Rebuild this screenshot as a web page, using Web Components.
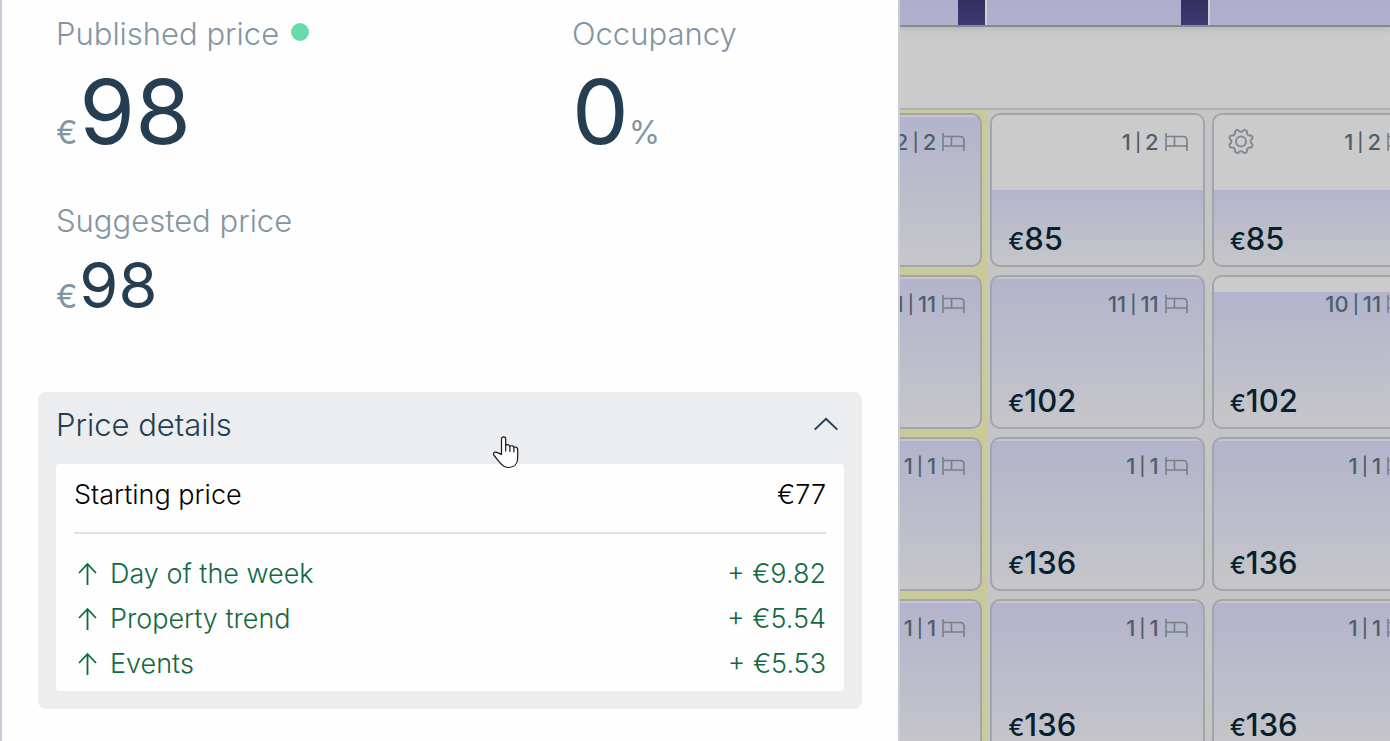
<!DOCTYPE html>
<html lang="en">
<head>
<meta charset="utf-8">
<title>Price overview</title>
<style>
  body { margin: 0; font-family: Inter, "Liberation Sans", sans-serif; background: #cbcbcb; }
</style>
</head>
<body>
<pricing-view></pricing-view>

<template id="t-view">
  <style>
    :host { display: grid; grid-template-columns: 900fr 490fr; height: 100vh; overflow: hidden; }
  </style>
  <price-panel></price-panel>
  <rate-calendar></rate-calendar>
</template>

<template id="t-panel">
  <style>
    :host { display: block; box-sizing: border-box; background: #fefefe; border: solid #c8ced8; border-width: 0 2px; padding: 14px 36px 32px; overflow: hidden; }
    .metrics { display: grid; grid-template-columns: 516fr 272fr; row-gap: 41px; padding: 0 18px; margin-bottom: 73px; }
    .dot { display: inline-block; width: 18px; height: 18px; border-radius: 50%; background: #6adaad; }
  </style>
  <div class="metrics">
    <price-metric prefix="€" value="98">Published price<span slot="status" class="dot"></span></price-metric>
    <price-metric suffix="%" value="0">Occupancy</price-metric>
    <price-metric compact prefix="€" value="98">Suggested price</price-metric>
  </div>
  <price-details></price-details>
</template>

<template id="t-metric">
  <style>
    :host { display: block; color: #8495a2; font-size: 31px; }
    .label { display: flex; align-items: center; gap: 12px; line-height: 40px; margin-bottom: 10px; font-weight: 350; }
    .label ::slotted(span) { margin-bottom: 4px; }
    .value { font-size: 90px; line-height: 96px; white-space: nowrap; color: #263e51; }
    .pre, .suf { font-size: 32px; line-height: 1; color: #8495a2; }
    .pre:not(:empty) { margin-right: 2px; }
    :host([compact]) .value { font-size: 63px; line-height: 68px; }
  </style>
  <div class="label"><span><slot></slot></span><slot name="status"></slot></div>
  <div class="value"><span class="pre"></span><span class="num"></span><span class="suf"></span></div>
</template>

<template id="t-details">
  <style>
    :host { display: block; position: relative; background: #ecedef; border-radius: 8px; padding: 0 18px 18px; }
    button { all: unset; display: flex; width: 100%; height: 72px; box-sizing: border-box; padding: 0 6px 8px 0; align-items: center; justify-content: space-between; font-size: 31px; font-weight: 350; color: #263e51; cursor: pointer; }
    .pointer { position: absolute; left: 55.2%; top: 44px; }
    .body { background: #fefefe; border-radius: 4px; padding: 0 18px 5px; }
    table { width: 100%; border-collapse: collapse; font-size: 27px; line-height: 36px; font-weight: 350; }
    th { font-weight: inherit; text-align: left; padding: 0; }
    td { text-align: right; padding: 0; }
    thead th, thead td { padding: 13px 0 19px; border-bottom: 2px solid #dde1e5; color: #000; }
    tbody { color: #126842; }
    tbody tr { height: 45px; }
    tbody::before { content: ""; display: table-row; height: 18px; }
    .factor { display: flex; align-items: center; gap: 10px; }
  </style>
  <button type="button" aria-expanded="true">Price details
    <svg width="24" height="14" viewBox="0 0 24 14" fill="none" stroke="#263e51" stroke-width="2"><path d="M.7 12.6 12 1.8l11.3 10.8"/></svg>
  </button>
  <div class="body">
    <table>
      <thead><tr><th scope="row">Starting price</th><td>€77</td></tr></thead>
      <tbody></tbody>
    </table>
  </div>
  <svg class="pointer" width="26" height="33" viewBox="0 0 26 33" fill="#fff" stroke="#14142a" stroke-width="1.2" stroke-linejoin="round" stroke-linecap="round"><path d="M8.500 18.500V3.200C8.500.200 12.700.200 12.700 3.200V9.200C14.300 8.500 16.200 8.900 16.900 10.200 18.600 9.300 20.200 9.800 20.900 11.200 22.900 10.600 24.700 11.400 24.700 13.700V21.500C24.700 28 21 31.500 15.800 31.500 11.300 31.500 9 29.300 6.700 26.300L1.100 19.500C-.3 17.400 1.200 15.600 3.700 16.300 5.700 16.900 7 17.700 8.500 18.500Z"/><path d="M12.700 9V15M16.900 10V15.500M20.900 11V15.800" fill="none"/></svg>
</template>

<template id="t-calendar">
  <style>
    :host { display: grid; grid-template-rows: 27px 81px 1fr; min-width: 0; overflow: hidden; background: #c5c5c5; }
    .chart, .grid { display: grid; grid-template-columns: 17.800% 45.400% 45.400%; }
    .chart { background: linear-gradient(#aeaccd, #b2b1cb); border-bottom: 2px solid #808a92; box-shadow: 0 1px 8px #0002; box-sizing: border-box; z-index: 1; }
    .bar { justify-self: end; width: 27px; background: linear-gradient(#32305d, #3e3a74); border-right: 2px solid #d0d0d0; }
    .gap { background: #cbcbcb; }
    .grid { border-top: 2px solid #adb1b5; align-items: start; }
    .col { display: grid; grid-auto-rows: 154px; gap: 8px; padding: 3px 5px 3px 3px; min-width: 0; }
    .today { background: #c9c999; padding-left: 0; }
    .col:last-child { padding-left: 2px; }
  </style>
  <div class="chart"><div class="bar"></div><div class="bar"></div></div>
  <div class="gap"></div>
  <div class="grid">
    <div class="col today">
      <rate-card edge rooms="2|2"></rate-card><rate-card edge rooms="11|11"></rate-card><rate-card edge rooms="1|1"></rate-card><rate-card edge rooms="1|1"></rate-card>
    </div>
    <div class="col">
      <rate-card rooms="1|2" price="85" fill="50"></rate-card><rate-card rooms="11|11" price="102"></rate-card><rate-card rooms="1|1" price="136"></rate-card><rate-card rooms="1|1" price="136"></rate-card>
    </div>
    <div class="col">
      <rate-card rooms="1|2" price="85" fill="50" settings></rate-card><rate-card rooms="10|11" price="102" fill="90"></rate-card><rate-card rooms="1|1" price="136"></rate-card><rate-card rooms="1|1" price="136"></rate-card>
    </div>
  </div>
</template>

<template id="t-card">
  <style>
    :host { display: flex; flex-direction: column; justify-content: space-between; box-sizing: border-box; min-width: 0; overflow: hidden; border: 2px solid #a0a6ab; border-radius: 10px; padding: 12px 15px 6px 16px; color: #081f2d; font-weight: 500;
      background: linear-gradient(#b3b3cc, #c6c6ca) 0 2px / 100% 100% #cbcbcb; }
    :host([fill]) { background-size: 100% var(--fill); background-position: 0 100%; background-repeat: no-repeat; }
    :host([edge]) { border-left: 0; border-radius: 0 10px 10px 0; padding-left: 0; }
    .top { display: flex; align-items: center; justify-content: flex-end; gap: 6px; height: 30px; font-size: 22px; color: #4e5f6b; }
    .gear { margin-right: auto; margin-left: -3px; display: none; }
    :host([settings]) .gear { display: block; }
    .rooms { display: flex; align-items: center; gap: 4px; }
    .bar { font-size: 18px; }
    .top svg { flex: none; }
    .price { font-size: 31px; line-height: 40px; }
    .price small { font-size: 24px; line-height: 1; }
  </style>
  <div class="top">
    <svg class="gear" width="28" height="28" viewBox="0 0 28 28" fill="none" stroke="#808b94" stroke-width="2"><circle cx="14" cy="13.500" r="5"/><path class="rim" stroke-linejoin="round"/></svg>
    <span class="rooms"></span>
    <svg width="23" height="18" viewBox="0 0 23 18" fill="none" stroke="#75818b" stroke-width="1.6"><path d="M1 0V18M1 3.500H18Q22 3.500 22 7.500V18M1 13H22M9.500 3.500V13"/></svg>
  </div>
  <div class="price"></div>
</template>

<script>
  const stamp = (el, id) => {
    const root = el.attachShadow({ mode: "open" });
    root.append(document.getElementById(id).content.cloneNode(true));
    return root;
  };

  /* Outline of an eight-toothed gear centred in a 28px box. */
  const gearPath = () => {
    const pts = [];
    for (let i = 0; i < 96; i++) {
      const a = (i / 96) * Math.PI * 2;
      const r = 10.9 + 1.3 * Math.tanh(1.8 * Math.cos(8 * (a - Math.PI / 8)));
      pts.push((14 + r * Math.cos(a)).toFixed(2) + " " + (13.5 + r * Math.sin(a)).toFixed(2));
    }
    return "M" + pts.join("L") + "Z";
  };

  customElements.define("price-metric", class extends HTMLElement {
    constructor() {
      super();
      const root = stamp(this, "t-metric");
      root.querySelector(".pre").textContent = this.getAttribute("prefix") || "";
      root.querySelector(".num").textContent = this.getAttribute("value");
      root.querySelector(".suf").textContent = this.getAttribute("suffix") || "";
    }
  });

  customElements.define("price-details", class extends HTMLElement {
    constructor() {
      super();
      const body = stamp(this, "t-details").querySelector("tbody");
      const factors = [["Day of the week", "9.82"], ["Property trend", "5.54"], ["Events", "5.53"]];
      body.innerHTML = factors.map(([name, amount]) => `<tr><th scope="row"><div class="factor">
        <svg width="26" height="24" viewBox="0 0 26 24" fill="none" stroke="#126842" stroke-width="1.8"><path d="M13.500 23V2M5 11 13.500 2 22 11"/></svg>${name}</div></th><td>+ €${amount}</td></tr>`).join("");
    }
  });

  customElements.define("rate-card", class extends HTMLElement {
    constructor() {
      super();
      const root = stamp(this, "t-card");
      root.querySelector(".rim").setAttribute("d", gearPath());
      const [free, total] = this.getAttribute("rooms").split("|");
      root.querySelector(".rooms").innerHTML = `<span>${free}</span><span class="bar">|</span><span>${total}</span>`;
      const price = this.getAttribute("price");
      if (price) root.querySelector(".price").innerHTML = `<small>€</small>${price}`;
      if (this.hasAttribute("fill")) this.style.setProperty("--fill", this.getAttribute("fill") + "%");
    }
  });

  customElements.define("rate-calendar", class extends HTMLElement {
    constructor() { super(); stamp(this, "t-calendar"); }
  });
  customElements.define("price-panel", class extends HTMLElement {
    constructor() { super(); stamp(this, "t-panel"); }
  });
  customElements.define("pricing-view", class extends HTMLElement {
    constructor() { super(); stamp(this, "t-view"); }
  });
</script>
</body>
</html>
